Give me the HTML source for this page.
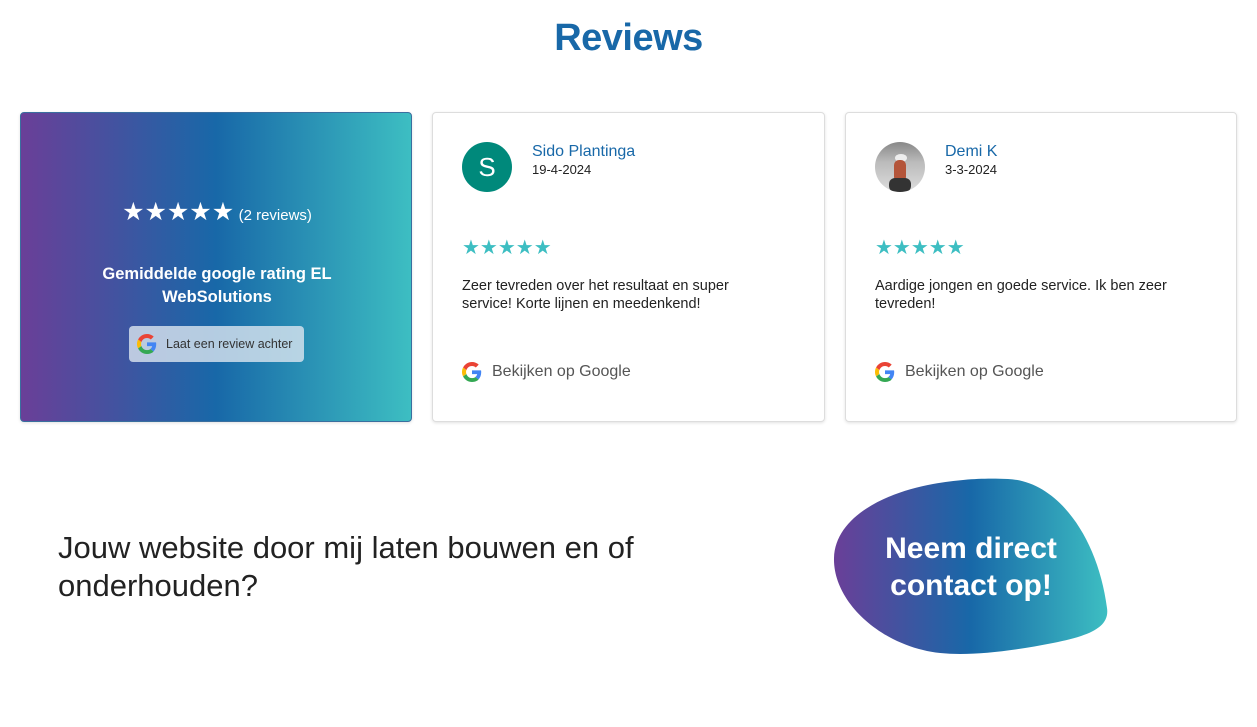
<!DOCTYPE html>
<html><head><meta charset="utf-8"><style>
*{margin:0;padding:0;box-sizing:border-box}
body{width:1257px;height:727px;background:#fff;font-family:"Liberation Sans",Arial,sans-serif;position:relative;overflow:hidden}
.a{position:absolute}
h1{position:absolute;left:0;width:1257px;text-align:center;top:17px;font-size:38px;font-weight:bold;color:#1868a8;letter-spacing:-0.5px}
.card{position:absolute;top:112px;height:310px;border:1px solid #ddd;border-radius:4px;background:#fff;box-shadow:0 1px 3px rgba(0,0,0,.12)}
.name{position:absolute;left:99px;top:30px;font-size:16px;color:#1868a8}
.date{position:absolute;left:99px;top:49px;font-size:13px;color:#222}
.stars{position:absolute;left:29px;top:122px;font-size:20px;color:#3dbec2}
.txt{position:absolute;left:29px;top:164px;width:320px;font-size:14.5px;line-height:18px;color:#222}
.gl{position:absolute;left:29px;top:249px;font-size:16px;color:#555;display:flex;align-items:center;gap:10px}
</style></head><body>
<h1>Reviews</h1>
<svg width="0" height="0" style="position:absolute"><defs><symbol id="g" viewBox="0 0 48 48"><path fill="#EA4335" d="M24 9.5c3.5 0 6.7 1.2 9.2 3.6l6.9-6.9C35.9 2.4 30.4 0 24 0 14.6 0 6.6 5.4 2.6 13.3l8 6.2C12.5 13.6 17.8 9.5 24 9.5z"/><path fill="#4285F4" d="M46.1 24.5c0-1.6-.1-3.1-.4-4.5H24v9h12.4c-.5 2.9-2.2 5.4-4.7 7l7.6 5.9c4.4-4.1 6.8-10.1 6.8-17.4z"/><path fill="#FBBC05" d="M10.5 28.6c-.5-1.4-.8-3-.8-4.6s.3-3.2.8-4.6l-8-6.2C.9 16.5 0 20.1 0 24s.9 7.5 2.6 10.7l7.9-6.1z"/><path fill="#34A853" d="M24 48c6.5 0 11.9-2.1 15.9-5.8l-7.6-5.9c-2.1 1.4-4.900 2.3-8.3 2.3-6.2 0-11.5-4.2-13.4-9.9l-8 6.1C6.6 42.6 14.6 48 24 48z"/></symbol></defs></svg>

<div class="card" style="left:20px;width:392px;border:1px solid #3a6f9f;background:linear-gradient(90deg,#6a3f98 0%,#1868a8 50%,#3dbec2 100%)">
  <div class="a" style="left:0;width:392px;top:84px;text-align:center;color:#fff;white-space:nowrap"><span style="font-size:25px">★★★★★</span> <span style="font-size:15px">(2 reviews)</span></div>
  <div class="a" style="left:0;width:392px;top:150px;text-align:center;color:#fff;font-weight:bold;font-size:16.5px;line-height:23px">Gemiddelde google rating EL<br>WebSolutions</div>
  <div class="a" style="left:108px;top:213px;width:175px;height:36px;background:rgba(220,230,240,.8);border-radius:4px;display:flex;align-items:center;padding-left:8px;gap:9px;font-size:12.5px;color:#333"><svg width="20" height="20"><use href="#g"/></svg>Laat een review achter</div>
</div>

<div class="card" style="left:432px;width:393px">
  <div class="a" style="left:29px;top:29px;width:50px;height:50px;border-radius:50%;background:#00897b;color:#fff;font-size:26px;text-align:center;line-height:50px">S</div>
  <div class="name">Sido Plantinga</div><div class="date">19-4-2024</div>
  <div class="stars">★★★★★</div>
  <div class="txt">Zeer tevreden over het resultaat en super service! Korte lijnen en meedenkend!</div>
  <div class="gl"><svg width="20" height="20"><use href="#g"/></svg>Bekijken op Google</div>
</div>

<div class="card" style="left:845px;width:392px">
  <div class="a" style="left:29px;top:29px;width:50px;height:50px;border-radius:50%;overflow:hidden;background:linear-gradient(180deg,#888 0%,#bbb 40%,#ddd 100%)">
    <div class="a" style="left:20px;top:12px;width:12px;height:8px;border-radius:50%;background:#eee"></div>
    <div class="a" style="left:19px;top:18px;width:12px;height:22px;background:#b4553a;border-radius:5px"></div>
    <div class="a" style="left:14px;top:36px;width:22px;height:14px;background:#333;border-radius:6px"></div>
  </div>
  <div class="name">Demi K</div><div class="date">3-3-2024</div>
  <div class="stars">★★★★★</div>
  <div class="txt">Aardige jongen en goede service. Ik ben zeer tevreden!</div>
  <div class="gl"><svg width="20" height="20"><use href="#g"/></svg>Bekijken op Google</div>
</div>

<div class="a" style="left:58px;top:529px;font-size:31px;line-height:38px;color:#222;font-weight:300">Jouw website door mij laten bouwen en of<br>onderhouden?</div>

<svg class="a" style="left:833px;top:478px" width="276" height="177" viewBox="0 0 276 177">
<defs><linearGradient id="bg" x1="0" x2="1"><stop offset="0" stop-color="#6a3f98"/><stop offset=".5" stop-color="#1868a8"/><stop offset="1" stop-color="#3dbec2"/></linearGradient></defs>
<path fill="url(#bg)" d="M175 1C225 3 265 60 274 130C277 150 255 158 220 165C170 175 120 180 90 172C40 160 0 120 1 80C2 40 50 15 100 6C130 1 150 0 175 1Z"/>
<text x="138" y="80" text-anchor="middle" fill="#fff" font-family="Liberation Sans,Arial,sans-serif" font-weight="bold" font-size="30">Neem direct</text>
<text x="138" y="117" text-anchor="middle" fill="#fff" font-family="Liberation Sans,Arial,sans-serif" font-weight="bold" font-size="30">contact op!</text>
</svg>
</body></html>
